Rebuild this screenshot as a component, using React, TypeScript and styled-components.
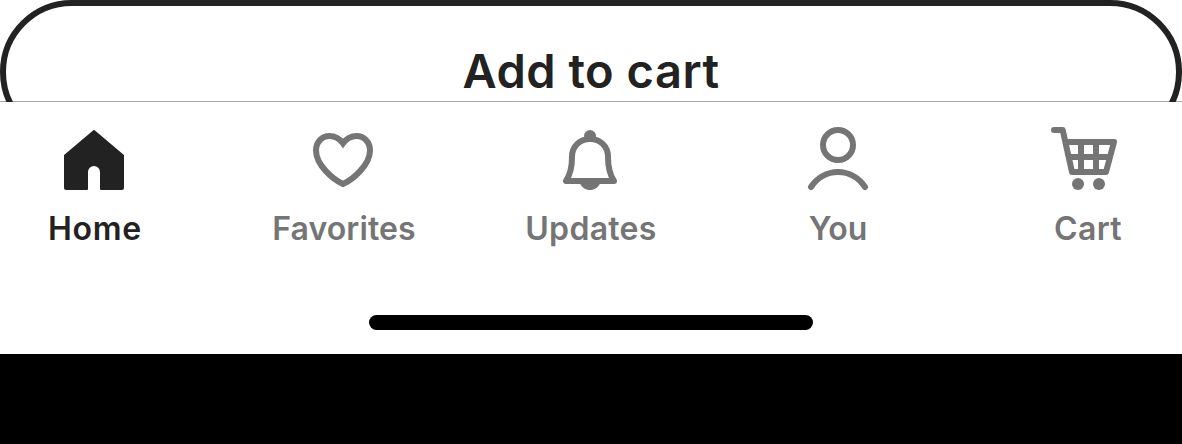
import React from "react";
import styled, { createGlobalStyle } from "styled-components";

const GlobalStyle = createGlobalStyle`
  body {
    margin: 0;
    background: #000;
    font-family: Inter, "Liberation Sans", sans-serif;
  }
`;

const Screen = styled.main`
  height: 354px;
  background: #fff;
  overflow: hidden;
`;

const ActionArea = styled.section`
  height: 102px;
  overflow: hidden;
  box-shadow: inset 0 -1px #a9a9a9;
`;

const CartButton = styled.button`
  display: flex;
  align-items: center;
  justify-content: center;
  box-sizing: border-box;
  width: 100%;
  height: 144px;
  padding: 0 0 2px;
  border: 6px solid #222;
  border-radius: 72px;
  background: transparent;
  color: #222;
  font: 560 47px/56px Inter, sans-serif;
  letter-spacing: 0.5px;
`;

const TabBar = styled.nav`
  display: grid;
  grid-template-columns: 249px 247px 248px 249px 144px;
  height: 213px;
  padding: 22px 0 0 22px;
  box-sizing: border-box;
`;

const Tab = styled.a<{ $active?: boolean }>`
  display: flex;
  flex-direction: column;
  align-items: center;
  width: 144px;
  color: ${(p) => (p.$active ? "#222" : "#757575")};
`;

const Icon = styled.svg`
  width: 72px;
  height: 72px;
  fill: none;
  stroke: currentColor;
  stroke-width: 6;
  stroke-linecap: round;
  stroke-linejoin: round;
  overflow: visible;
`;

const Label = styled.span<{ $spacing: number }>`
  margin-top: 13px;
  padding-left: ${(p) => (p.$spacing > 0 ? 2 : 0)}px;
  font-size: 32px;
  font-weight: 600;
  line-height: 40px;
  white-space: nowrap;
  letter-spacing: ${(p) => p.$spacing}px;
`;

const HomeIndicator = styled.div`
  width: 444px;
  height: 15px;
  margin: 0 auto;
  border-radius: 7.5px;
  background: #000;
`;

const tabs = [
  {
    label: "Home",
    spacing: 0.7,
    active: true,
    icon: (
      <path
        d="M36 7 L65 31.5 V64 Q65 65 64 65 H43 V48 A7 7 0 0 0 29 48 V65 H8 Q7 65 7 64 V31.5 Z"
        fill="currentColor"
        strokeWidth="2"
      />
    ),
  },
  {
    label: "Favorites",
    spacing: 0.1,
    icon: (
      <path
        d="M36 60 C27 56 9 41.5 9 26.5 C9 18 15 12 22.5 12 C28 12 32.5 14.5 36 19.3 C39.5 14.5 44 12 49.5 12 C57 12 63 18 63 26.5 C63 41.5 45 56 36 60 Z"
        strokeLinejoin="miter"
      />
    ),
  },
  {
    label: "Updates",
    spacing: 0.3,
    icon: (
      <>
        <path d="M12 57 H60 C56 51 54 44 54 33 C54 22 46 15 36 15 C26 15 18 22 18 33 C18 44 16 51 12 57 Z" />
        <circle cx="36" cy="12" r="6" fill="currentColor" stroke="none" />
        <path d="M25.5 59 C28 63.5 31.5 66 36 66 S44 63.5 46.5 59 Z" fill="currentColor" stroke="none" />
      </>
    ),
  },
  {
    label: "You",
    spacing: 0,
    icon: (
      <>
        <circle cx="36" cy="21" r="15" />
        <path d="M9 63 C15 54 25 48 36 48 S57 54 63 63" />
      </>
    ),
  },
  {
    label: "Cart",
    spacing: 0.4,
    icon: (
      <>
        <path d="M3 6 H11.7 L21 48 H55 L63 18 H14.5" />
        <path d="M18 33 H58 M30 18 V48 M45 18 V48" />
        <circle cx="27" cy="60" r="6" fill="currentColor" stroke="none" />
        <circle cx="48" cy="60" r="6" fill="currentColor" stroke="none" />
      </>
    ),
  },
];

export default function App() {
  return (
    <>
      <GlobalStyle />
      <Screen>
        <ActionArea>
          <CartButton>Add to cart</CartButton>
        </ActionArea>
        <TabBar>
          {tabs.map((tab) => (
            <Tab key={tab.label} $active={tab.active}>
              <Icon viewBox="0 0 72 72">{tab.icon}</Icon>
              <Label $spacing={tab.spacing}>{tab.label}</Label>
            </Tab>
          ))}
        </TabBar>
        <HomeIndicator />
      </Screen>
    </>
  );
}
